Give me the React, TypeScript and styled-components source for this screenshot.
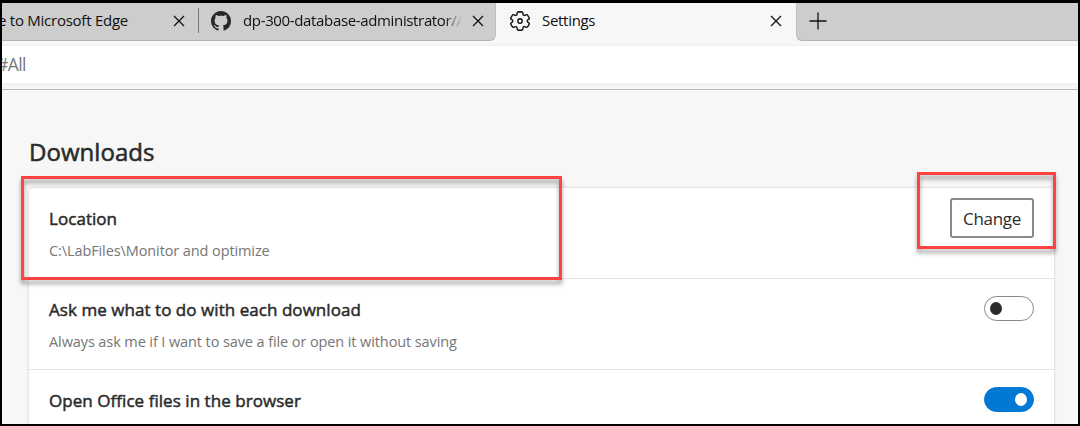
import React from "react";
import styled, { createGlobalStyle } from "styled-components";

const GlobalStyle = createGlobalStyle`
  *, *::before, *::after { box-sizing: border-box; }
  body { margin: 0; font-family: "Open Sans", "Noto Sans", sans-serif; color: #2b2b2b; }
  button { font: inherit; color: inherit; background: none; border: 0; padding: 0; }
`;

const Window = styled.div`
  position: relative;
  display: flex;
  flex-direction: column;
  width: 1080px;
  height: 426px;
  overflow: hidden;
  border: 2px solid #000;
  border-top-width: 3px;
  background: #f7f7f7;
`;

const TabStrip = styled.header`
  display: flex;
  flex: none;
  height: 38px;
  font-size: 15px;
  color: #101010;
`;

const InactiveTabs = styled.div`
  display: flex;
  align-items: center;
  width: 494px;
  padding: 0 0 2px;
  background: #cdcdcd;
  border-bottom: 1px solid #b4b4b4;
  border-right: 1px solid #c0c0c0;
  border-bottom-right-radius: 6px;
  overflow: hidden;
`;

const ActiveTab = styled.div`
  display: flex;
  align-items: center;
  width: 300px;
  padding: 0 13px 3px 13px;
`;

const StripEnd = styled.div`
  display: flex;
  flex: 1;
  align-items: center;
  padding: 0 0 2px 12px;
  background: #cdcdcd;
  border-bottom: 1px solid #b4b4b4;
  border-left: 1px solid #c0c0c0;
  border-bottom-left-radius: 6px;
`;

const TabTitle = styled.span<{ $indent?: number; $spacing: number; $width?: number; $fade?: boolean }>`
  flex: ${(p) => (p.$width ? "none" : 1)};
  width: ${(p) => (p.$width ? `${p.$width}px` : "auto")};
  margin-left: ${(p) => p.$indent ?? 0}px;
  margin-top: -2px;
  line-height: 22px;
  letter-spacing: ${(p) => p.$spacing}px;
  white-space: nowrap;
  overflow: hidden;
  ${(p) => p.$fade && "mask-image: linear-gradient(to right, #000 92%, transparent 100%); margin-right: 9px;"}
`;

const TabDivider = styled.i`
  width: 1px;
  height: 25px;
  margin: 0 12px;
  background: #777;
`;

const IconButton = styled.button`
  display: flex;
  flex: none;
`;

const AddressBar = styled.div`
  display: flex;
  flex: none;
  align-items: center;
  height: 49px;
  padding-bottom: 2px;
  border-bottom: 1px solid #b9b9b9;
  background: linear-gradient(#f7f7f7 0 2px, #f0f0f0 5px, #fff 5px 42px, #f0f0f0 42px, #f7f7f7 47px);
  font-size: 17.5px;
  letter-spacing: -0.6px;
  color: #777;
`;

const AddressText = styled.span`
  margin-left: -5px;
`;

const Content = styled.main`
  flex: 1;
  min-height: 0;
  padding: 43px 24px 0 27px;
`;

const Heading = styled.h1`
  margin: 0 0 18px;
  font-size: 24px;
  font-weight: 400;
  line-height: 37px;
  letter-spacing: 0.05px;
  -webkit-text-stroke: 0.55px currentColor;
`;

const Card = styled.section`
  background: #fff;
  border-radius: 4px;
  box-shadow: 0 0 3px rgba(0, 0, 0, 0.2);
`;

const SettingRow = styled.div`
  display: flex;
  align-items: flex-start;
  justify-content: space-between;
  height: 91px;
  padding: 0 20px;
  border-bottom: 1px solid #e5e5e5;
`;

const SettingLabel = styled.div`
  padding-top: 18px;
`;

const SettingTitle = styled.div`
  font-size: 17px;
  font-weight: 400;
  line-height: 26px;
  letter-spacing: 0.05px;
  -webkit-text-stroke: 0.5px currentColor;
`;

const SettingDetail = styled.div`
  margin-top: 8px;
  font-size: 14.5px;
  line-height: 22px;
  letter-spacing: -0.1px;
  color: #767676;
`;

const ChangeButton = styled.button`
  && {
    width: 84px;
    height: 40px;
    margin-top: 10px;
    border: 2px solid #8a8a8a;
    border-radius: 3px;
    font-size: 17px;
    letter-spacing: -0.3px;
  }
`;

const Toggle = styled.button<{ $on?: boolean }>`
  && {
    display: flex;
    align-items: center;
    justify-content: ${(p) => (p.$on ? "flex-end" : "flex-start")};
    width: 50px;
    height: 25px;
    margin-top: 17px;
    padding: 0 ${(p) => (p.$on ? 6 : 5)}px;
    border: 1px solid ${(p) => (p.$on ? "#0078d4" : "#8a8a8a")};
    border-radius: 13px;
    background: ${(p) => (p.$on ? "#0078d4" : "#fff")};
  }
`;

const Knob = styled.span<{ $on?: boolean }>`
  width: 12px;
  height: 13px;
  border-radius: 50%;
  background: ${(p) => (p.$on ? "#fff" : "#2b2b2b")};
`;

const Highlight = styled.div<{ $x: number; $y: number; $w: number; $h: number }>`
  position: absolute;
  left: ${(p) => p.$x}px;
  top: ${(p) => p.$y}px;
  width: ${(p) => p.$w}px;
  height: ${(p) => p.$h}px;
  border: 3px solid #ff4343;
  filter: drop-shadow(0 4px 2px rgba(0, 0, 0, 0.38));
  pointer-events: none;
`;

const CloseIcon = () => (
  <svg width="14" height="14" viewBox="0 0 14 14" stroke="#111" strokeWidth="1.3">
    <path d="M2 2l10 10M12 2L2 12" />
  </svg>
);

const PlusIcon = () => (
  <svg width="18" height="18" viewBox="0 0 18 18" stroke="#111" strokeWidth="1.3">
    <path d="M9 0.5v17M.5 9h17" />
  </svg>
);

const GitHubIcon = () => (
  <svg width="20" height="20" viewBox="0 0 16 16" fill="#24292e">
    <path d="M8 0C3.58 0 0 3.58 0 8c0 3.54 2.29 6.53 5.47 7.59.4.07.55-.17.55-.38 0-.19-.01-.82-.01-1.49-2.01.37-2.53-.49-2.69-.94-.09-.23-.48-.94-.82-1.13-.28-.15-.68-.52-.01-.53.63-.01 1.08.58 1.23.82.72 1.21 1.87.87 2.33.66.07-.52.28-.87.51-1.07-1.78-.2-3.64-.89-3.64-3.95 0-.87.31-1.59.82-2.15-.08-.2-.36-1.02.08-2.12 0 0 .67-.21 2.2.82.64-.18 1.32-.27 2-.27s1.36.09 2 .27c1.53-1.04 2.2-.82 2.2-.82.44 1.1.16 1.92.08 2.12.51.56.82 1.27.82 2.15 0 3.07-1.87 3.75-3.65 3.95.29.25.54.73.54 1.48 0 1.07-.01 1.93-.01 2.2 0 .21.15.46.55.38A8.01 8.01 0 0 0 16 8c0-4.42-3.58-8-8-8z" />
  </svg>
);

const GearIcon = () => (
  <svg width="22" height="22" viewBox="1 1 22 22" fill="none" stroke="#111" strokeWidth="1.4">
    <path d="M12.012 2.75c.734.008 1.465.093 2.182.253a.75.75 0 0 1 .582.649l.17 1.527a1.384 1.384 0 0 0 1.927 1.116l1.401-.615a.75.75 0 0 1 .85.174 9.792 9.792 0 0 1 2.204 3.292.75.75 0 0 1-.271.825l-1.242.916a1.381 1.381 0 0 0 0 2.226l1.243.915a.75.75 0 0 1 .272.826 9.797 9.797 0 0 1-2.204 3.292.75.75 0 0 1-.848.175l-1.407-.617a1.38 1.38 0 0 0-1.926 1.114l-.169 1.526a.75.75 0 0 1-.572.647 9.518 9.518 0 0 1-4.406 0 .75.75 0 0 1-.572-.647l-.168-1.524a1.382 1.382 0 0 0-1.926-1.11l-1.406.616a.75.75 0 0 1-.849-.175 9.798 9.798 0 0 1-2.204-3.296.75.75 0 0 1 .272-.826l1.243-.916a1.38 1.38 0 0 0 0-2.226l-1.243-.914a.75.75 0 0 1-.271-.826 9.793 9.793 0 0 1 2.204-3.292.75.75 0 0 1 .85-.174l1.4.615a1.387 1.387 0 0 0 1.93-1.118l.17-1.526a.75.75 0 0 1 .583-.65c.717-.159 1.45-.243 2.201-.252z" />
    <circle cx="12" cy="12" r="2.2" />
  </svg>
);

export default function App() {
  return (
    <Window>
      <GlobalStyle />
      <TabStrip>
        <InactiveTabs>
          <TabTitle $width={174} $indent={-4} $spacing={-0.25}>e to Microsoft Edge</TabTitle>
          <IconButton aria-label="Close tab"><CloseIcon /></IconButton>
          <TabDivider />
          <GitHubIcon />
          <TabTitle $width={219} $indent={12} $spacing={-0.35} $fade>dp-300-database-administrator/All</TabTitle>
          <IconButton aria-label="Close tab"><CloseIcon /></IconButton>
        </InactiveTabs>
        <ActiveTab>
          <GearIcon />
          <TabTitle $indent={11} $spacing={-0.3}>Settings</TabTitle>
          <IconButton aria-label="Close tab"><CloseIcon /></IconButton>
        </ActiveTab>
        <StripEnd>
          <IconButton aria-label="New tab"><PlusIcon /></IconButton>
        </StripEnd>
      </TabStrip>
      <AddressBar>
        <AddressText>#All</AddressText>
      </AddressBar>
      <Content>
        <Heading>Downloads</Heading>
        <Card>
          <SettingRow>
            <SettingLabel>
              <SettingTitle>Location</SettingTitle>
              <SettingDetail>C:\LabFiles\Monitor and optimize</SettingDetail>
            </SettingLabel>
            <ChangeButton>Change</ChangeButton>
          </SettingRow>
          <SettingRow>
            <SettingLabel>
              <SettingTitle>Ask me what to do with each download</SettingTitle>
              <SettingDetail>Always ask me if I want to save a file or open it without saving</SettingDetail>
            </SettingLabel>
            <Toggle aria-label="Ask me what to do with each download"><Knob /></Toggle>
          </SettingRow>
          <SettingRow>
            <SettingLabel>
              <SettingTitle>Open Office files in the browser</SettingTitle>
            </SettingLabel>
            <Toggle $on aria-label="Open Office files in the browser"><Knob $on /></Toggle>
          </SettingRow>
        </Card>
      </Content>
      <Highlight $x={19} $y={173} $w={541} $h={104} />
      <Highlight $x={915} $y={169} $w={139} $h={77} />
    </Window>
  );
}
